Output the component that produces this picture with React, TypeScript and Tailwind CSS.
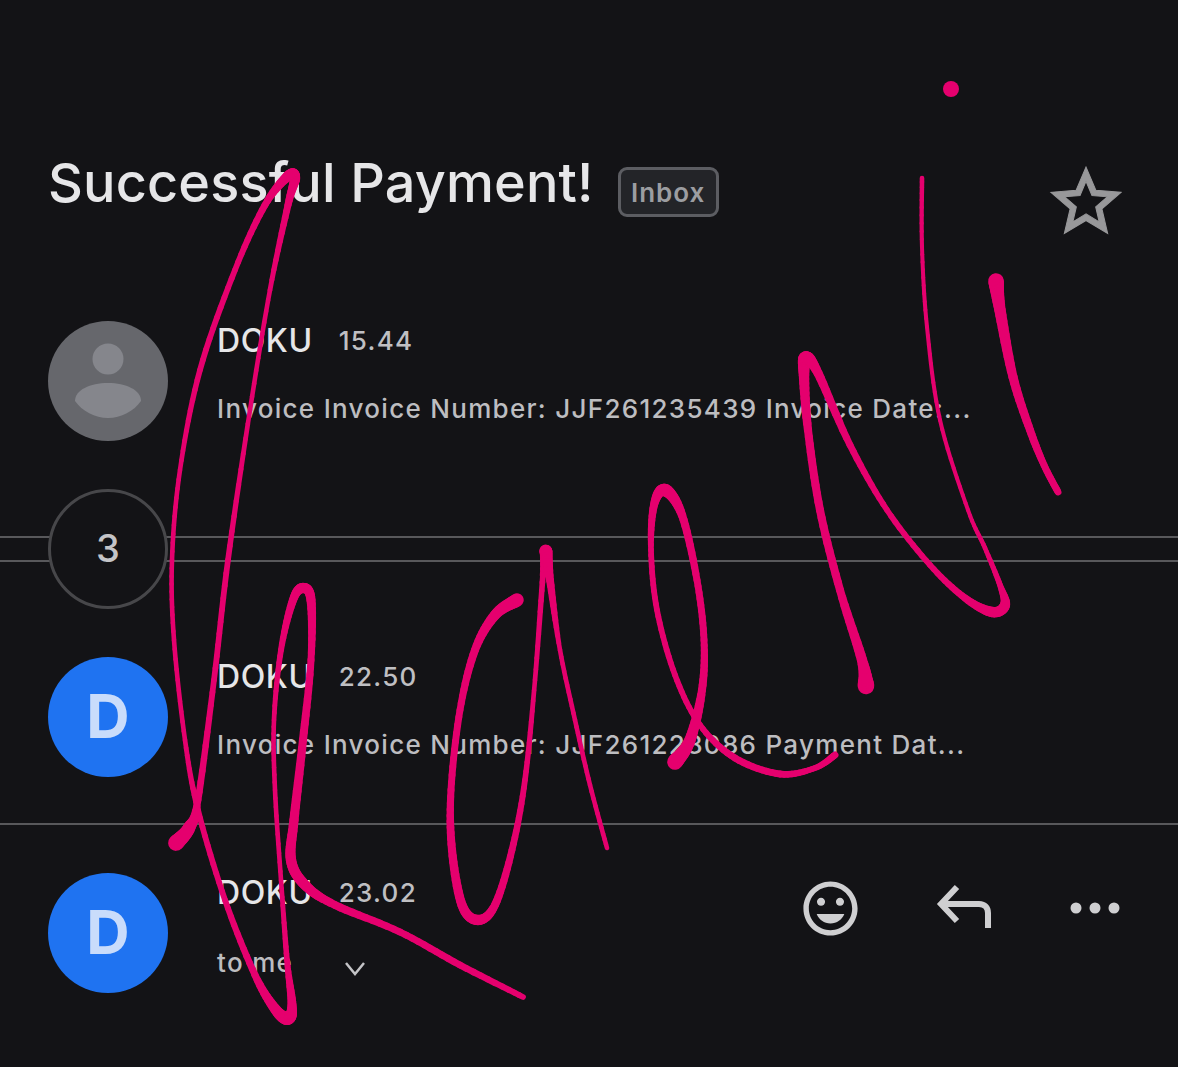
import React from 'react';

type Pt = [number, number, number];

const strokes: Pt[][] = [
  [
    [176, 843, 14], [189, 828, 11], [198, 800, 6], [214, 680, 5], [228, 560, 5], [250, 410, 4],
    [270, 290, 4], [288, 205, 6], [295, 178, 9], [288, 176, 9], [265, 205, 6], [235, 270, 5],
    [200, 370, 5], [180, 470, 4], [172, 560, 4], [174, 640, 4], [185, 740, 4], [198, 810, 5],
    [225, 900, 5], [255, 975, 6], [276, 1010, 9], [288, 1018, 12], [292, 1005, 8], [287, 960, 5],
    [281, 880, 4], [275, 790, 4], [274, 720, 4], [281, 650, 5], [293, 600, 7], [303, 588, 9],
    [311, 600, 8], [311, 660, 6], [303, 740, 7], [294, 820, 8], [291, 860, 9], [305, 885, 9],
    [335, 905, 7], [400, 932, 6], [460, 965, 6], [523, 997, 5],
  ],
  [
    [517, 600, 12], [495, 615, 9], [475, 650, 7], [460, 710, 6], [451, 790, 6], [452, 850, 7],
    [462, 905, 8], [478, 920, 9], [495, 905, 7], [512, 850, 6], [525, 780, 5], [535, 680, 4],
    [543, 575, 5], [546, 551, 11], [550, 580, 7], [560, 650, 4], [575, 720, 4], [590, 785, 4],
    [607, 848, 4],
  ],
  [
    [675, 762, 14], [690, 740, 10], [702, 690, 7], [704, 640, 6], [697, 580, 6], [682, 515, 7],
    [665, 490, 11], [654, 505, 7], [651, 550, 5], [657, 610, 5], [675, 675, 5], [700, 725, 5],
    [735, 758, 6], [780, 774, 6], [815, 768, 5], [835, 755, 6],
  ],
  [
    [866, 686, 15], [862, 660, 9], [840, 590, 7], [820, 510, 7], [808, 430, 7], [804, 375, 9],
    [806, 358, 12], [818, 373, 8], [850, 445, 6], [887, 510, 5], [930, 565, 5], [965, 598, 6],
    [992, 612, 9], [1005, 605, 9], [1000, 585, 5], [985, 548, 4], [968, 510, 3.5], [940, 420, 3.5],
    [927, 327, 3.5], [922, 247, 3.5], [922, 178, 4],
  ],
  [
    [996, 281, 14], [1000, 310, 10], [1013, 377, 8], [1030, 430, 7], [1044, 465, 6], [1058, 492, 6],
  ],
];

// samples a catmull-rom spline so the pen width can change along the stroke
const sample = (pts: Pt[]) => {
  const out: Pt[] = [];
  for (let i = 0; i < pts.length - 1; i++) {
    const p0 = pts[Math.max(i - 1, 0)];
    const p1 = pts[i];
    const p2 = pts[i + 1];
    const p3 = pts[Math.min(i + 2, pts.length - 1)];
    for (let s = 0; s < 10; s++) {
      const t = s / 10;
      const f = (k: number) =>
        0.5 *
        (2 * p1[k] +
          (p2[k] - p0[k]) * t +
          (2 * p0[k] - 5 * p1[k] + 4 * p2[k] - p3[k]) * t * t +
          (3 * p1[k] - p0[k] - 3 * p2[k] + p3[k]) * t * t * t);
      out.push([f(0), f(1), p1[2] + (p2[2] - p1[2]) * t]);
    }
  }
  out.push(pts[pts.length - 1]);
  return out;
};

const Scribble = () => (
  <svg
    className="pointer-events-none absolute inset-0"
    width={1178}
    height={1067}
    viewBox="0 0 1178 1067"
    fill="none"
    stroke="#e5006e"
    strokeLinecap="round"
  >
    {strokes.map((pts, i) =>
      sample(pts)
        .slice(1)
        .map((p, j, arr) => {
          const prev = j === 0 ? pts[0] : arr[j - 1];
          return (
            <line key={i + '-' + j} x1={prev[0]} y1={prev[1]} x2={p[0]} y2={p[1]} strokeWidth={p[2] * 1.15} />
          );
        }),
    )}
    <circle cx={951} cy={89} r={8} fill="#e5006e" stroke="none" />
  </svg>
);

const BlueAvatar = () => (
  <div className="flex h-[120px] w-[120px] shrink-0 items-center justify-center rounded-full bg-[#1f73f1] pb-[2px] text-[60px] font-bold text-[#c9dcfb]">
    D
  </div>
);

const GreyAvatar = () => (
  <div className="flex h-[120px] w-[120px] shrink-0 items-center justify-center rounded-full bg-[#66676c]">
    <svg width="120" height="120" viewBox="0 0 120 120" fill="#85868c">
      <ellipse cx="60" cy="38" rx="15.5" ry="15.5" />
      <path d="M27 80c0-11 15-18 33-18s33 7 33 18c-7 10-20 17-33 17s-26-7-33-17z" />
    </svg>
  </div>
);

interface RowProps {
  avatar: React.ReactNode;
  time: string;
  children: React.ReactNode;
}

const Row = ({ avatar, time, children }: RowProps) => (
  <div className="flex h-[120px] gap-[49px] pl-[48px]">
    {avatar}
    <div className="flex flex-col">
      <div className="mt-[1px] flex h-[38px] items-center gap-[26px]">
        <span className="text-[32px] font-medium tracking-[0.6px] text-[#e6e6e8]">DOKU</span>
        <span className="mb-[2px] text-[26px] font-medium tracking-[1.3px] text-[#bfbfc2]">{time}</span>
      </div>
      {children}
    </div>
  </div>
);

const Snippet = ({ text }: { text: string }) => (
  <p className="mt-[34px] text-[26px] leading-[30px] font-medium tracking-[1.3px] whitespace-nowrap text-[#bdbdc0]">
    {text}
  </p>
);

const App = () => (
  <div className="relative h-[1067px] w-[1178px] overflow-hidden bg-[#131316] font-['Inter',sans-serif]">
    <header className="flex h-[321px] items-start pt-[150px] pl-[48px]">
      <h1 className="text-[54px] leading-[66px] font-medium tracking-[0.15px] text-[#e6e6e8]">
        Successful Payment!
      </h1>
      <span className="mt-[17px] ml-[24px] flex h-[50px] w-[101px] items-center justify-center rounded-[9px] border-[3px] border-[#5c5d62] bg-[#232428] text-[26px] font-semibold tracking-[1px] text-[#9c9da1]">
        Inbox
      </span>
      <svg className="absolute top-[160px] left-[1044px]" width="84" height="84" viewBox="0 0 24 24" fill="#98989a" stroke="#98989a" strokeWidth="0.3">
        <path d="M22 9.24l-7.19-.62L12 2 9.19 8.63 2 9.24l5.46 4.73L5.82 21 12 17.27 18.18 21l-1.63-7.03L22 9.24zM12 15.4l-3.76 2.27 1-4.28-3.32-2.88 4.38-.38L12 6.1l1.71 4.04 4.38.38-3.32 2.88 1 4.28L12 15.4z" />
      </svg>
    </header>

    <Row avatar={<GreyAvatar />} time="15.44">
      <Snippet text="Invoice Invoice Number: JJF261235439 Invoice Date:..." />
    </Row>

    <div className="relative mt-[48px] flex h-[120px] items-center">
      <div className="h-[26px] w-full border-y-2 border-[#58585b]" />
      <div className="absolute top-0 left-[48px] flex h-[120px] w-[120px] items-center justify-center rounded-full border-[3px] border-[#47474a] bg-[#131316] pb-[2px] text-[38px] font-medium text-[#c4c4c7]">
        3
      </div>
    </div>

    <div className="mt-[48px]">
      <Row avatar={<BlueAvatar />} time="22.50">
        <Snippet text="Invoice Invoice Number: JJF261228086 Payment Dat..." />
      </Row>
    </div>

    <div className="mt-[46px] mb-[48px] border-t-2 border-[#58585b]" />

    <div className="relative">
      <Row avatar={<BlueAvatar />} time="23.02">
        <div className="mt-[31px] flex items-center">
          <span className="text-[26px] font-medium tracking-[1.3px] text-[#bdbdc0]">to me</span>
          <svg className="mt-[12px] ml-[51px]" width="22" height="16" viewBox="0 0 22 16" fill="none" stroke="#c4c4c7" strokeWidth="2.5">
            <path d="M2 2l9 11 9-11" />
          </svg>
        </div>
      </Row>
      <div className="absolute top-[3px] left-[798px] flex items-center">
        <svg width="65" height="65" viewBox="0 0 24 24" fill="#cfcfd1">
          <path d="M11.99 2C6.47 2 2 6.48 2 12s4.47 10 9.99 10C17.52 22 22 17.52 22 12S17.52 2 11.99 2zM12 20c-4.42 0-8-3.58-8-8s3.58-8 8-8 8 3.58 8 8-3.58 8-8 8zm3.5-9c.83 0 1.5-.67 1.5-1.5S16.33 8 15.5 8 14 8.67 14 9.5s.67 1.5 1.5 1.5zm-7 0c.83 0 1.5-.67 1.5-1.5S9.33 8 8.5 8 7 8.67 7 9.5 7.67 11 8.5 11zm3.5 6.5c2.33 0 4.31-1.46 5.11-3.5H6.89c.8 2.04 2.78 3.5 5.11 3.5z" />
        </svg>
        <svg className="ml-[72px]" width="60" height="50" viewBox="0 0 60 50" fill="none" stroke="#cfcfd1" strokeWidth="6">
          <path d="M22 3L6 20l16 17M6 20h38c6 0 9 4 9 9v15" />
        </svg>
        <svg className="mb-[2px] ml-[74px]" width="60" height="14" viewBox="0 0 60 14" fill="#cfcfd1">
          <circle cx="7" cy="7" r="5.5" />
          <circle cx="26" cy="7" r="5.5" />
          <circle cx="45" cy="7" r="5.5" />
        </svg>
      </div>
    </div>

    <Scribble />
  </div>
);

export default App;
